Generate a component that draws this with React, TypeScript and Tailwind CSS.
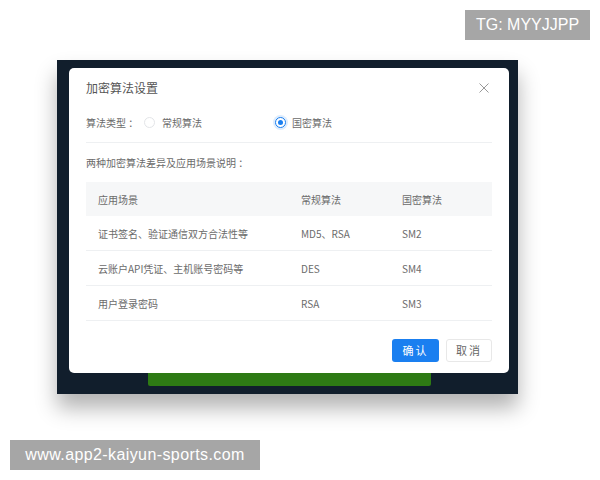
import { useState } from "react";

type Row = {
  scene: string;
  normal: string;
  national: string;
};

const rows: Row[] = [
  { scene: "证书签名、验证通信双方合法性等", normal: "MD5、RSA", national: "SM2" },
  { scene: "云账户API凭证、主机账号密码等", normal: "DES", national: "SM4" },
  { scene: "用户登录密码", normal: "RSA", national: "SM3" },
];

const Radio = ({ checked }: { checked: boolean }) => (
  <span
    className={
      checked
        ? "w-[11px] h-[11px] rounded-full border border-[#1a7ff0] bg-white flex items-center justify-center shadow-[0_0_0_2px_rgba(26,127,240,0.15)]"
        : "w-[11px] h-[11px] rounded-full border border-[#e3e5e8] bg-white"
    }
  >
    {checked && <span className="w-[5px] h-[5px] rounded-full bg-[#1a7ff0]" />}
  </span>
);

const App = () => {
  const [mode, setMode] = useState<"normal" | "national">("national");

  return (
    <div
      className="relative w-[600px] h-[480px] bg-white overflow-hidden"
      style={{ fontFamily: '"Noto Sans CJK SC", sans-serif' }}
    >
      <div className="pt-[60px] pl-[57px]">
        {/* FRAME */}
        <div className="relative w-[461px] h-[334px] bg-[#111e2c] pt-[8px] pl-[12px] shadow-[0_14px_20px_rgba(0,0,0,0.3)]">
          <div className="absolute left-[91px] bottom-[8px] w-[283px] h-[40px] bg-[#2e7a14] rounded-[2px]" />

          {/* MODAL */}
          <div className="relative w-[440px] h-[305px] bg-white rounded-[5px] px-[17px] flex flex-col">
            <div className="h-[40px] flex items-center justify-between">
              <h2 className="text-[12px] text-[#555]">加密算法设置</h2>
              <button type="button" className="mr-[3px] text-[#999]">
                <svg width="10" height="10" viewBox="0 0 10 10" fill="none" stroke="currentColor" strokeWidth="1">
                  <path d="M0.5 0.5L9.5 9.5M9.5 0.5L0.5 9.5" />
                </svg>
              </button>
            </div>

            <div className="h-[28px] flex items-center text-[10px] text-[#6b6b6b]">
              <span className="w-[58px]">算法类型 ：</span>
              <label className="flex items-center gap-[7px] w-[131px] cursor-pointer" onClick={() => setMode("normal")}>
                <Radio checked={mode === "normal"} />
                <span>常规算法</span>
              </label>
              <label className="flex items-center gap-[6px] cursor-pointer" onClick={() => setMode("national")}>
                <Radio checked={mode === "national"} />
                <span>国密算法</span>
              </label>
            </div>

            <div className="mt-[6px] h-px bg-[#eef0f2]" />

            <div className="h-[39px] flex items-center text-[10px] text-[#6b6b6b]">
              两种加密算法差异及应用场景说明 ：
            </div>

            <div className="text-[10px] text-[#6b6b6b]">
              <div className="h-[34px] flex items-center bg-[#f6f7f8]">
                <span className="w-[203px] pl-[12px]">应用场景</span>
                <span className="w-[101px] pl-[12px]">常规算法</span>
                <span className="flex-1 pl-[12px]">国密算法</span>
              </div>
              {rows.map((row) => (
                <div key={row.scene} className="h-[35px] flex items-center border-b border-[#eef0f2]">
                  <span className="w-[203px] pl-[12px]">{row.scene}</span>
                  <span className="w-[101px] pl-[12px]">{row.normal}</span>
                  <span className="flex-1 pl-[12px]">{row.national}</span>
                </div>
              ))}
            </div>

            <div className="mt-[18px] flex justify-end gap-[7px]">
              <button
                type="button"
                className="w-[47px] h-[23px] rounded-[3px] bg-[#1a7ff0] text-white text-[11px] tracking-[2px]"
              >
                确认
              </button>
              <button
                type="button"
                className="w-[46px] h-[23px] rounded-[3px] bg-white border border-[#e8e8e8] text-[#666] text-[11px] tracking-[2px]"
              >
                取消
              </button>
            </div>
          </div>
        </div>
      </div>

      {/* WATERMARKS */}
      <div
        className="absolute left-[465px] top-[10px] w-[125px] h-[30px] bg-[#a6a6a6] text-white text-[16px] flex items-center justify-center"
        style={{ fontFamily: '"Liberation Sans", Arial, sans-serif' }}
      >
        TG: MYYJJPP
      </div>
      <div
        className="absolute left-[10px] top-[440px] w-[250px] h-[30px] bg-[#a6a6a6] text-white text-[16px] tracking-[0.4px] flex items-center justify-center"
        style={{ fontFamily: '"Liberation Sans", Arial, sans-serif' }}
      >
        www.app2-kaiyun-sports.com
      </div>
    </div>
  );
};

export default App;
